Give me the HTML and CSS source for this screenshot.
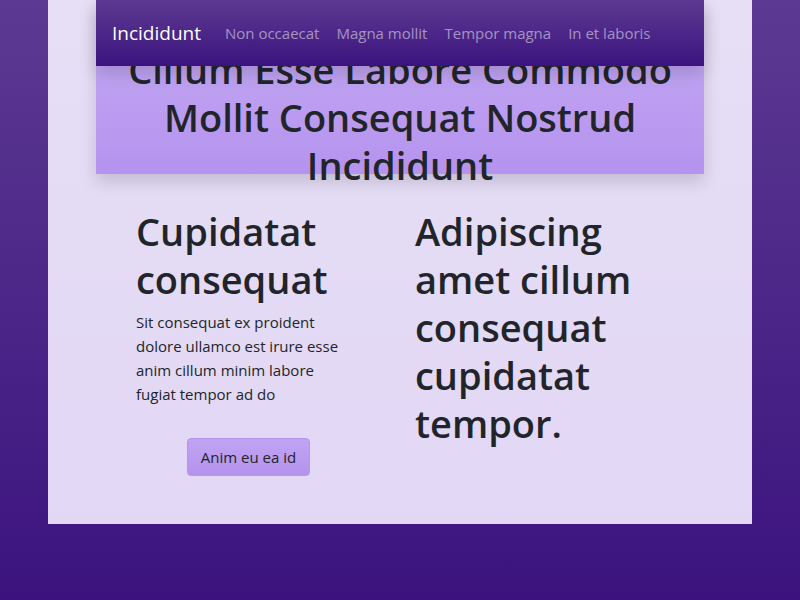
FILE: index.html
```html
<!DOCTYPE html>
<html lang="la">
<head>
<meta charset="utf-8">
<title>Incididunt</title>
<link rel="stylesheet" href="styles.css">
</head>
<body>
<div class="page">
  <nav class="navbar">
    <a class="brand" href="#">Incididunt</a>
    <a class="nav-link" href="#">Non occaecat</a>
    <a class="nav-link" href="#">Magna mollit</a>
    <a class="nav-link" href="#">Tempor magna</a>
    <a class="nav-link" href="#">In et laboris</a>
  </nav>
  <header class="hero">
    <h1>Cillum Esse Labore Commodo Mollit Consequat Nostrud Incididunt</h1>
  </header>
  <main class="columns">
    <section class="column">
      <h1>Cupidatat consequat</h1>
      <p>Sit consequat ex proident dolore ullamco est irure esse anim cillum minim labore fugiat tempor ad do</p>
      <button class="button" type="button">Anim eu ea id</button>
    </section>
    <section class="column">
      <h1>Adipiscing amet cillum consequat cupidatat tempor.</h1>
    </section>
  </main>
</div>
</body>
</html>
```
FILE: styles.css
```css
* {
  box-sizing: border-box;
}

html {
  min-height: 100%;
  background: linear-gradient(#5c3a92, #3c137e);
}

body {
  margin: 0;
  color: #212529;
  font: 15px/24px "Segoe UI", "Open Sans", "Noto Sans", sans-serif;
}

h1 {
  margin: 0 0 7px;
  font-size: 38px;
  font-weight: 600;
  line-height: 48px;
}

p {
  margin: 0;
  padding-right: 16px;
}

.page {
  margin: 0 48px;
  padding: 0 48px 48px;
  background: linear-gradient(#e6dff5, #e2d7f5);
}

.navbar {
  position: relative;
  z-index: 1;
  display: flex;
  align-items: center;
  gap: 17px;
  height: 66px;
  padding: 0 16px;
  background: linear-gradient(#5c3a92, #3c137e);
  box-shadow: 0 8px 16px rgba(0, 0, 0, 0.15);
}

.brand {
  margin-right: 7px;
  color: #fff;
  font-size: 19px;
  text-decoration: none;
}

.nav-link {
  color: rgba(255, 255, 255, 0.5);
  text-decoration: none;
}

.hero {
  display: flex;
  align-items: flex-end;
  height: 174px;
  margin-top: -66px;
  padding: 0 16px;
  background: linear-gradient(#c6acf4, #b593ee);
  box-shadow: 0 8px 16px rgba(0, 0, 0, 0.15);
  text-align: center;
}

.hero h1 {
  flex: 1;
  margin-bottom: -15px;
}

.columns {
  display: grid;
  grid-template-columns: 1fr 1fr;
  gap: 54px;
  padding: 33px 64px 0 40px;
}

.button {
  display: block;
  margin: 32px auto 0;
  padding: 6px 13px;
  border: 1px solid #b593ee;
  border-radius: 4px;
  background: linear-gradient(#c0a4f2, #b593ee);
  color: #212529;
  font: inherit;
}
```
